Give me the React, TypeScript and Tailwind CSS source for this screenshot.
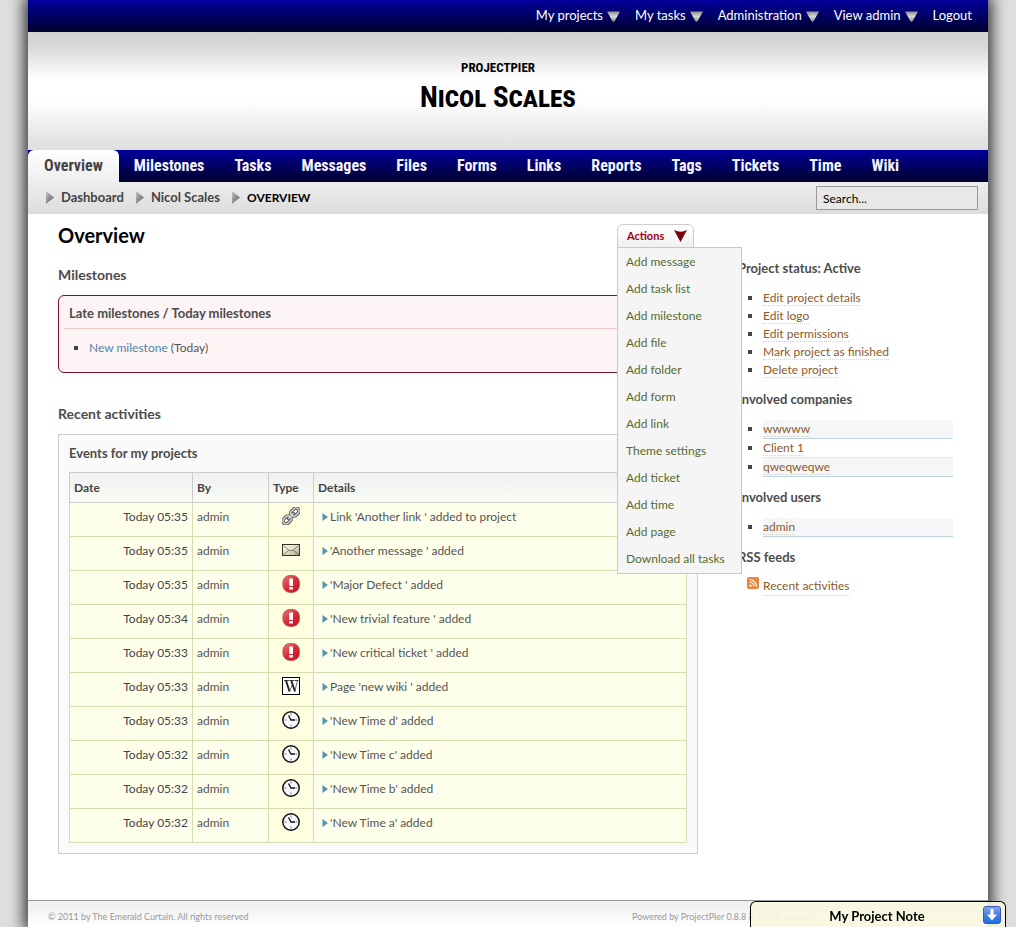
import React, { useState } from 'react';

type IconKind = 'link' | 'message' | 'ticket' | 'wiki' | 'time';

const tabs = ['Overview', 'Milestones', 'Tasks', 'Messages', 'Files', 'Forms', 'Links', 'Reports', 'Tags', 'Tickets', 'Time', 'Wiki'];

const accountLinks = [
  { label: 'My projects', menu: true },
  { label: 'My tasks', menu: true },
  { label: 'Administration', menu: true },
  { label: 'View admin', menu: true },
  { label: 'Logout', menu: false },
];

const actions = ['Add message', 'Add task list', 'Add milestone', 'Add file', 'Add folder', 'Add form', 'Add link', 'Theme settings', 'Add ticket', 'Add time', 'Add page', 'Download all tasks'];

const events: { time: string; kind: IconKind; text: string }[] = [
  { time: '05:35', kind: 'link', text: "Link 'Another link ' added to project" },
  { time: '05:35', kind: 'message', text: "'Another message ' added" },
  { time: '05:35', kind: 'ticket', text: "'Major Defect ' added" },
  { time: '05:34', kind: 'ticket', text: "'New trivial feature ' added" },
  { time: '05:33', kind: 'ticket', text: "'New critical ticket ' added" },
  { time: '05:33', kind: 'wiki', text: "Page 'new wiki ' added" },
  { time: '05:33', kind: 'time', text: "'New Time d' added" },
  { time: '05:32', kind: 'time', text: "'New Time c' added" },
  { time: '05:32', kind: 'time', text: "'New Time b' added" },
  { time: '05:32', kind: 'time', text: "'New Time a' added" },
];

function DownArrow() {
  return (
    <svg width="13" height="11" viewBox="0 0 13 11" aria-hidden="true" className="mt-0.5">
      <defs>
        <linearGradient id="down" x1="0" y1="0" x2="0" y2="1">
          <stop offset="0" stopColor="#8c8c94" />
          <stop offset="0.5" stopColor="#d8d8d8" />
          <stop offset="1" stopColor="#8f8f8f" />
        </linearGradient>
      </defs>
      <path d="M0 .5H13L8 9.500Q6.500 12 5 9.500Z" fill="url(#down)" />
    </svg>
  );
}

function CrumbArrow() {
  return (
    <svg width="8" height="13" viewBox="0 0 8 13" aria-hidden="true">
      <defs>
        <linearGradient id="crumb" x1="0" y1="0" x2="1" y2="1">
          <stop offset="0" stopColor="#c4c4c4" />
          <stop offset="1" stopColor="#5a5a5a" />
        </linearGradient>
      </defs>
      <path d="M0 0L8 6.500L0 13Z" fill="url(#crumb)" />
    </svg>
  );
}

function TypeIcon({ kind }: { kind: IconKind }) {
  const box = { width: 18, height: 18, viewBox: '0 0 18 18', 'aria-hidden': true, className: 'mx-auto block' };
  if (kind === 'link') {
    return (
      <svg {...box}>
        <g transform="rotate(-45 9 9)" fill="none" strokeLinecap="round">
          <g stroke="#5a5a5a" strokeWidth="3.400">
            <rect x="-1" y="6" width="9" height="6" rx="3" />
            <rect x="10" y="6" width="9" height="6" rx="3" />
            <path d="M5.500 9H12.500" />
          </g>
          <g stroke="#dcdcdc" strokeWidth="1.300">
            <rect x="-1" y="6" width="9" height="6" rx="3" />
            <rect x="10" y="6" width="9" height="6" rx="3" />
            <path d="M5.500 9H12.500" />
          </g>
        </g>
      </svg>
    );
  }
  if (kind === 'message') {
    return (
      <svg {...box}>
        <defs>
          <linearGradient id="mail" x1="0" y1="0" x2="1" y2="1">
            <stop offset="0" stopColor="#fbfbea" />
            <stop offset="0.5" stopColor="#e0e0c8" />
            <stop offset="1" stopColor="#a6a690" />
          </linearGradient>
        </defs>
        <rect x=".5" y="3.500" width="17" height="11" fill="url(#mail)" stroke="#333326" />
        <path d="M1.500 4.500L7 9.500H11L16.500 4.500M1.500 13.500L6.500 9.500M16.500 13.500L11.500 9.500" fill="none" stroke="#66664f" strokeWidth=".8" />
      </svg>
    );
  }
  if (kind === 'ticket') {
    return (
      <svg {...box}>
        <defs>
          <linearGradient id="alert" x1="0" y1="0" x2="1" y2="1">
            <stop offset="0" stopColor="#ee7a80" />
            <stop offset="0.5" stopColor="#dc2b38" />
            <stop offset="1" stopColor="#c30d1e" />
          </linearGradient>
        </defs>
        <rect x=".9" y=".4" width="16.500" height="17" rx="7" fill="url(#alert)" stroke="#a83a3f" strokeWidth=".7" />
        <rect x="7.200" y="3.500" width="3.800" height="7.500" fill="#fff" />
        <rect x="7.200" y="12" width="3.800" height="2.500" fill="#fff" />
      </svg>
    );
  }
  if (kind === 'wiki') {
    return (
      <svg {...box}>
        <rect x=".5" y=".5" width="17" height="17" fill="#fff" stroke="#000" />
        <path d="M2 3.500H7.500M8 3.500H12M12.500 3.500H16.500" stroke="#222" strokeWidth=".9" />
        <path d="M4 3.500L7.500 14.500M9.200 3.500L13 14.500" stroke="#222" strokeWidth="1.900" />
        <path d="M7.500 14.500L10.300 7.500M12.800 14.500L15.500 3.500" stroke="#444" strokeWidth=".8" />
      </svg>
    );
  }
  return (
    <svg {...box}>
      <circle cx="9" cy="9" r="8.200" fill="#f8f8fb" stroke="#111" strokeWidth="1.500" />
      <path d="M9 2.500V4.500M9 13.500V15.500M2.500 9H4.500M13.500 9H15.500" stroke="#777" />
      <path d="M6.500 4.500L9 9H13" fill="none" stroke="#111" strokeWidth="1.300" />
    </svg>
  );
}

function SideList({ items, striped }: { items: string[]; striped?: boolean }) {
  return (
    <ul className="ml-[25px] list-[square] marker:text-[#444]">
      {items.map((item, i) => (
        <li
          key={item}
          className={
            striped
              ? i % 2 === 0
                ? 'h-[19px] border-b border-[#bfd3e0] bg-[#f5f6f8] leading-[18px]'
                : 'h-[19px] border-b border-[#e2e6e9] leading-[18px]'
              : 'h-[18px] leading-[18px]'
          }
        >
          <SideLink>{item}</SideLink>
        </li>
      ))}
    </ul>
  );
}

function SideLink({ children }: { children: React.ReactNode }) {
  return (
    <a href="#" className="border-b border-dotted border-[#d8d2ca] text-[#8b5a2b]">
      {children}
    </a>
  );
}

export default function App() {
  const [open, setOpen] = useState(true);
  const heading = 'text-[13px] leading-5 font-bold text-[#4c4c4c]';
  return (
    <div className="min-h-screen overflow-x-hidden bg-[#dfdfdf] font-['Lato','Open_Sans',sans-serif] text-xs text-[#555]">
      <div className="mx-auto flex min-h-screen max-w-[960px] flex-col bg-white shadow-[0_0_14px_4px_#333]">
        <nav aria-label="Account" className="flex h-8 items-center justify-end gap-[15px] bg-linear-to-b from-[#00009e] to-[#000030] px-4 text-[13px] text-white">
          {accountLinks.map((link) => (
            <a key={link.label} href="#" className="flex items-center gap-1">
              {link.label}
              {link.menu && <DownArrow />}
            </a>
          ))}
        </nav>

        <header className="flex h-[118px] flex-col items-center bg-[linear-gradient(to_bottom,#d2d2d2,#d6d6d6_10%,#fff_40%,#fff_58%,#dedede)] pt-7 pr-5 font-['Roboto_Condensed','Lato',sans-serif] font-bold text-black">
          <div className="text-[13px] leading-4">PROJECTPIER</div>
          <h1 className="text-[29px] leading-[42px] font-bold [font-variant:small-caps]">Nicol Scales</h1>
        </header>

        <nav aria-label="Project" className="flex h-8 bg-linear-to-b from-[#00009e] to-[#000030] font-['Roboto_Condensed','Lato',sans-serif] text-base leading-8 font-bold text-[#f4f4ff]">
          {tabs.map((tab, i) => (
            <a
              key={tab}
              href="#"
              className={i === 0 ? 'rounded-t-md bg-linear-to-b from-white to-[#eee] px-4 text-[#444]' : 'px-[15px]'}
            >
              {tab}
            </a>
          ))}
        </nav>

        <div className="flex h-8 items-center justify-between bg-linear-to-b from-[#eee] to-[#dcdcdc] pr-[10px] pl-[18px]">
          <ol className="flex items-center gap-3 text-[13px] font-bold text-[#444]">
            <li className="flex items-center gap-[7px]"><CrumbArrow /><a href="#">Dashboard</a></li>
            <li className="flex items-center gap-[7px]"><CrumbArrow /><a href="#">Nicol Scales</a></li>
            <li className="flex items-center gap-[7px] text-xs text-black"><CrumbArrow />OVERVIEW</li>
          </ol>
          <input type="text" aria-label="Search" defaultValue="Search..." className="h-6 w-[162px] border border-[#999] bg-[#e8e8e8] px-1.5 text-xs text-black" />
        </div>

        <main className="flex flex-1 pr-[35px] pb-[46px] pl-[30px]">
          <div className="relative w-[640px] shrink-0">
            <h2 className="mt-2 text-xl leading-[26px] font-bold text-black">Overview</h2>
            <h3 className="mt-[17px] text-sm leading-5 font-bold text-[#4c4c4c]">Milestones</h3>
            <section className="mt-[10px] h-[78px] rounded-md border border-[#7c1024] bg-[#fcf4f5] px-[5px] pt-[7px]">
              <h4 className={`${heading} h-[26px] border-b border-[#ecc9c9] pl-[5px]`}>Late milestones / Today milestones</h4>
              <ul className="mt-[9px] ml-[25px] list-[square] marker:text-[#444]">
                <li className="leading-5"><a href="#" className="text-[#4f86a8]">New milestone</a> (Today)</li>
              </ul>
            </section>
            <h3 className="mt-[31px] text-sm leading-5 font-bold text-[#4c4c4c]">Recent activities</h3>
            <section className="mt-[10px] border border-[#ccc] bg-[#fafafa] px-[10px] pt-2 pb-[10px]">
              <h4 className={`${heading} mb-[9px]`}>Events for my projects</h4>
              <table className="w-full table-fixed border-collapse">
                <colgroup>
                  <col className="w-[123px]" />
                  <col className="w-[76px]" />
                  <col className="w-[45px]" />
                  <col />
                </colgroup>
                <thead>
                  <tr className="h-[30px] bg-linear-to-b from-[#f0f0f0] to-[#f9fcf5] text-left text-[#444]">
                    {['Date', 'By', 'Type', 'Details'].map((name) => (
                      <th key={name} scope="col" className="border border-[#ccc] px-1 font-bold">{name}</th>
                    ))}
                  </tr>
                </thead>
                <tbody>
                  {events.map((event, i) => (
                    <tr key={i} className="h-[34px] bg-[#feffea] *:border *:border-[#d5deb0]">
                      <td className="px-1 pb-1.5 text-right text-[#444]">Today {event.time}</td>
                      <td className="px-1 pb-1.5">admin</td>
                      <td className="bg-[#fdffe0] pb-2"><TypeIcon kind={event.kind} /></td>
                      <td className="pb-1.5 pl-2">
                        <div className="flex items-center gap-0.5">
                          <svg width="6" height="8" viewBox="0 0 6 8" aria-hidden="true"><path d="M.5 0L6 4L.5 8Z" fill="#5096ae" /></svg>
                          <span>{event.text}</span>
                        </div>
                      </td>
                    </tr>
                  ))}
                </tbody>
              </table>
            </section>

            <div className="absolute top-[10px] left-[559px] z-10 w-[125px]">
              <button
                type="button"
                aria-expanded={open}
                onClick={() => setOpen(!open)}
                className="flex h-6 w-[77px] items-center justify-between rounded-t-md border border-[#ccc] bg-linear-to-b from-white to-[#f0f0f0] pr-1.5 pl-[9px] text-[11px] font-bold text-[#a00010]"
              >
                Actions
                <svg width="13" height="12" viewBox="0 0 13 12" aria-hidden="true"><path d="M0 0Q6.500 3.500 13 0L6.500 12Z" fill="#780008" /></svg>
              </button>
              {open && (
                <ul className="-mt-px border border-[#c5cdb4] bg-[#f5f5f5] pb-px pl-2">
                  {actions.map((action) => (
                    <li key={action} className="h-[27px] leading-[27px] whitespace-nowrap">
                      <a href="#" className="text-[#556b2f]">{action}</a>
                    </li>
                  ))}
                </ul>
              )}
            </div>
          </div>

          <aside className="ml-10 flex-1 pt-[44px]">
            <h3 className={`${heading} mb-[11px]`}>Project status: Active</h3>
            <SideList items={['Edit project details', 'Edit logo', 'Edit permissions', 'Mark project as finished', 'Delete project']} />
            <h3 className={`${heading} mt-[10px] mb-[11px]`}>Involved companies</h3>
            <SideList striped items={['wwwww', 'Client 1', 'qweqweqwe']} />
            <h3 className={`${heading} mt-[10px] mb-[11px]`}>Involved users</h3>
            <SideList striped items={['admin']} />
            <h3 className={`${heading} mt-[10px] mb-[10px]`}>RSS feeds</h3>
            <div className="flex items-start gap-1 pl-[9px] leading-[18px]">
              <svg width="12" height="12" viewBox="0 0 12 12" aria-hidden="true">
                <rect width="12" height="12" rx="2" fill="#e8843c" />
                <circle cx="3.500" cy="8.600" r="1.200" fill="#fff" />
                <path d="M2.500 5A4.500 4.500 0 0 1 7 9.600M2.500 2.500A7 7 0 0 1 9.500 9.600" fill="none" stroke="#fff" strokeWidth="1.200" />
              </svg>
              <SideLink>Recent activities</SideLink>
            </div>
          </aside>
        </main>

        <footer className="flex h-[27px] justify-between overflow-hidden border-t border-[#999] bg-linear-to-b from-[#eee] to-white px-5 text-[9px] leading-8 whitespace-nowrap text-[#999]">
          <span>© 2011 by The Emerald Curtain. All rights reserved</span>
          <span className="w-[336px]">Powered by ProjectPier 0.8.8 in 0.548 seconds</span>
        </footer>
      </div>

      <div className="fixed right-[10px] bottom-0 z-20 flex h-[26px] w-[256px] items-center rounded-t-md border border-b-0 border-black bg-[#f8f8e0]/90 pr-1 pl-5 text-[13px] font-bold text-black">
        <span className="flex-1 pt-1 text-center">My Project Note</span>
        <button type="button" aria-label="Collapse note">
          <svg width="18" height="18" viewBox="0 0 18 18" aria-hidden="true">
            <defs>
              <linearGradient id="note" x1="0" y1="0" x2="0" y2="1">
                <stop offset="0" stopColor="#8fb0f2" />
                <stop offset="0.450" stopColor="#4a7fe0" />
                <stop offset="1" stopColor="#1a6fe8" />
              </linearGradient>
            </defs>
            <rect x=".5" y=".5" width="17" height="17" rx="2.500" fill="url(#note)" stroke="#3a50c8" />
            <path d="M7.500 3H10.500V8.500H14L9 14.500L4 8.500H7.500Z" fill="#fff" />
          </svg>
        </button>
      </div>
    </div>
  );
}
